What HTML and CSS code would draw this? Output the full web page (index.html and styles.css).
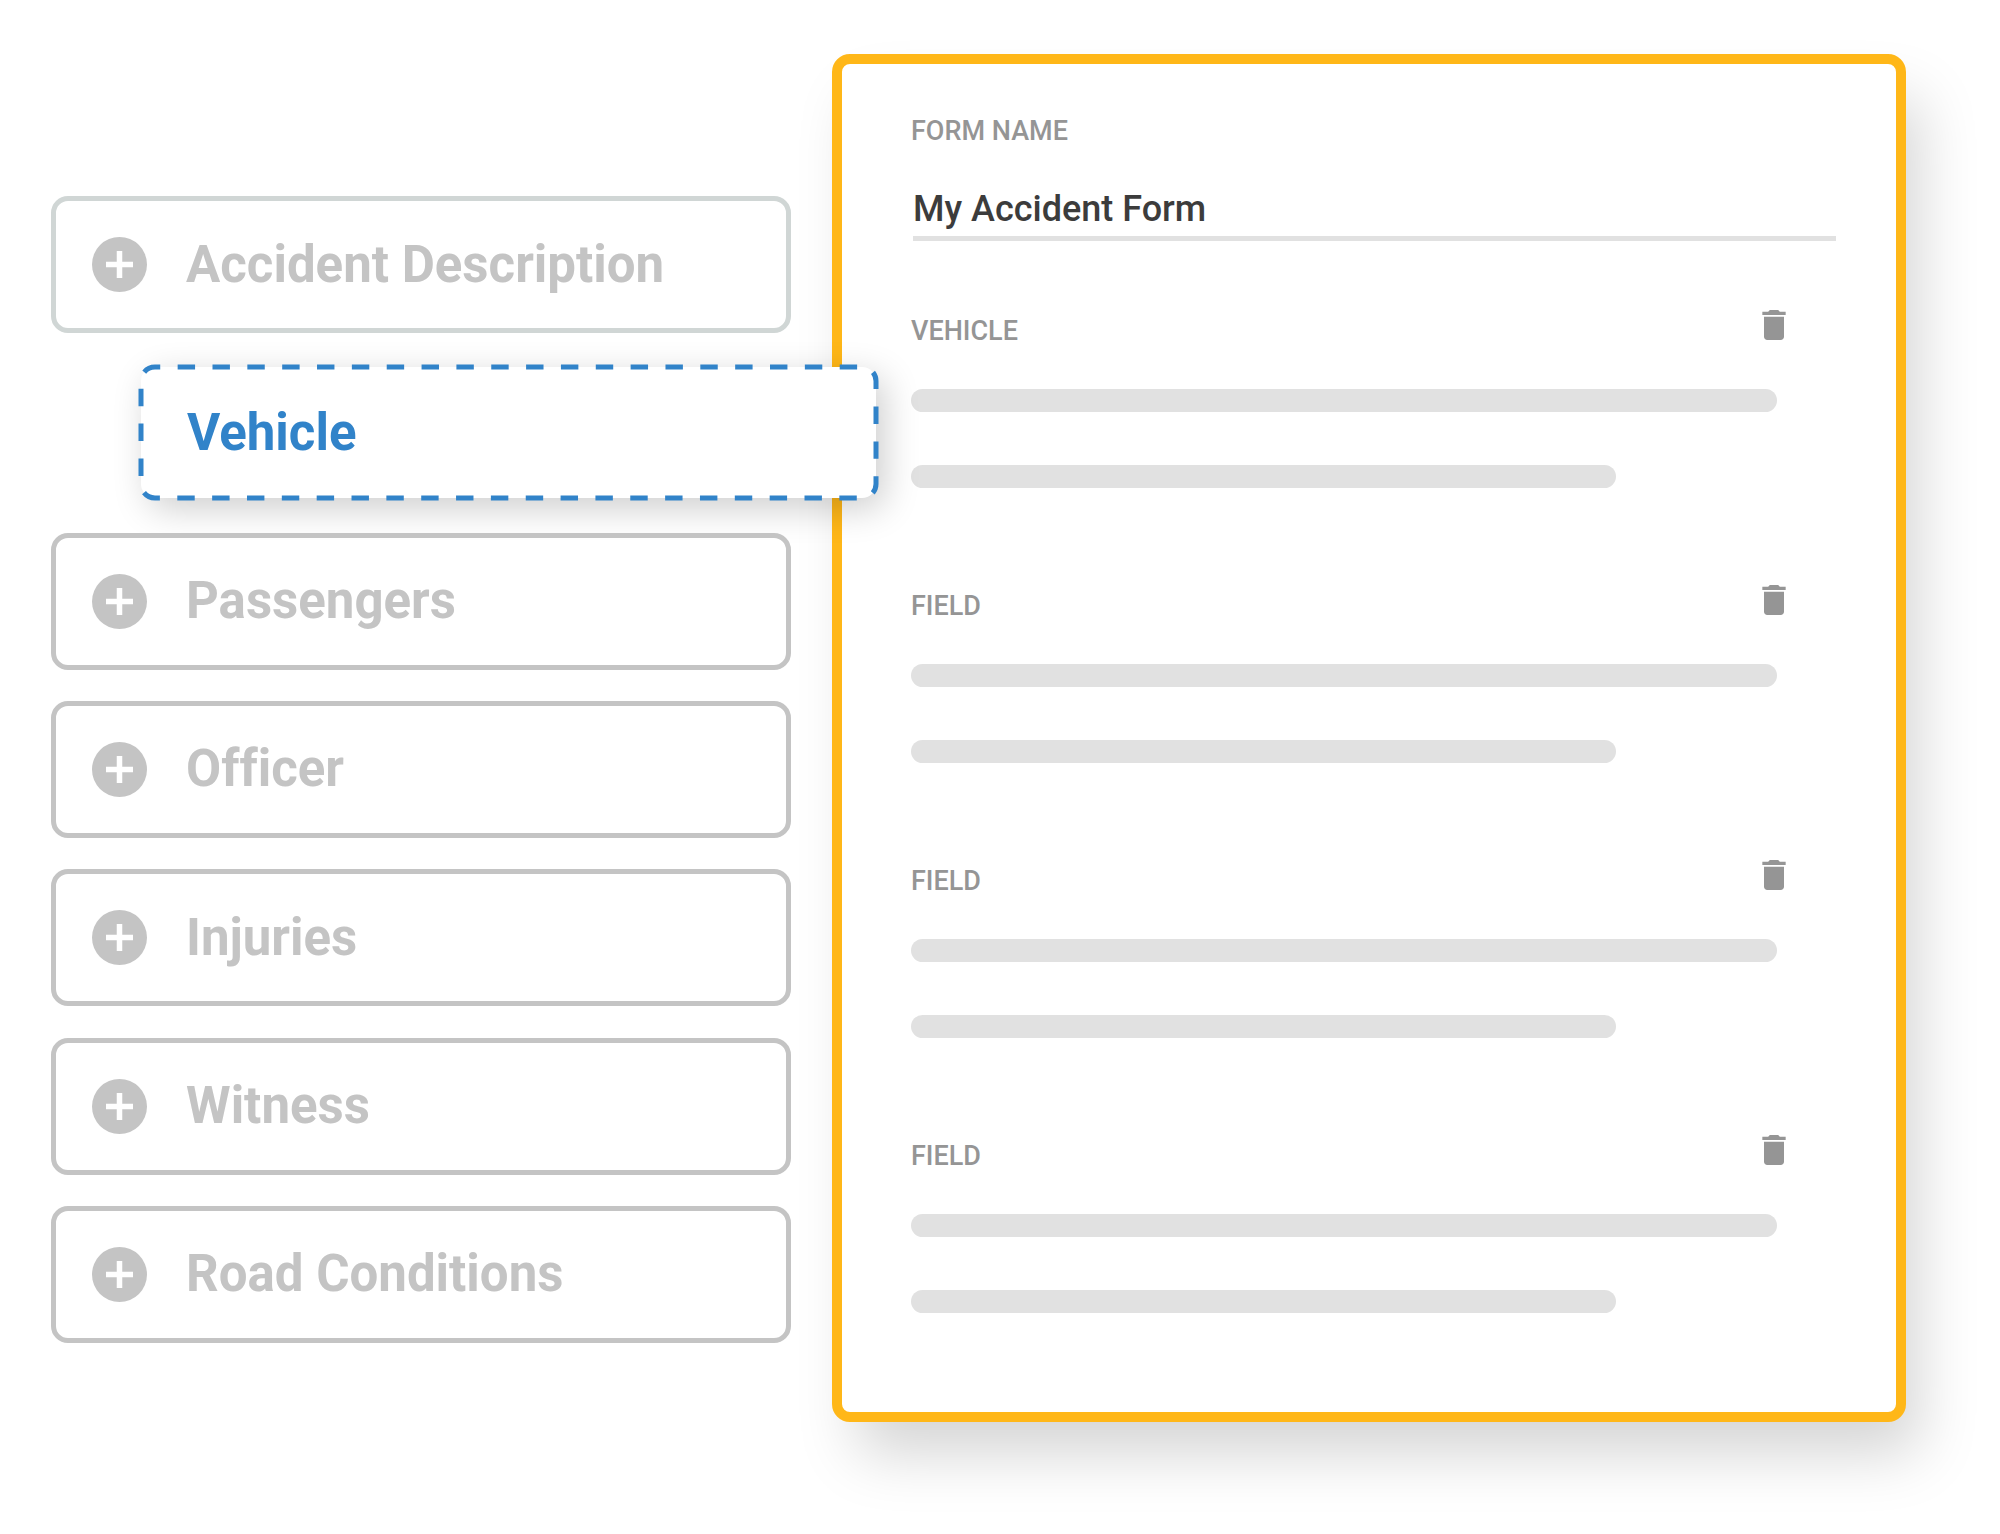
FILE: index.html
```html
<!DOCTYPE html>
<html lang="en">
<head>
    <meta charset="UTF-8">
    <meta name="viewport" content="width=device-width, initial-scale=1.0">
    <title>Form Builder</title>
    <link rel="stylesheet" href="styles.css">
</head>
<body>
<svg class="symbols" aria-hidden="true">
    <symbol id="icon-add" viewBox="0 0 55 55">
        <circle cx="27.5" cy="27.5" r="27.5" fill="currentColor"/>
        <path d="M27.5 14v27M14 27.5h27" stroke="#fff" stroke-width="5.5"/>
    </symbol>
    <symbol id="icon-delete" viewBox="0 0 24 24">
        <path fill="currentColor" d="M6 19c0 1.1.9 2 2 2h8c1.1 0 2-.9 2-2V7H6v12zM19 4h-3.5l-1-1h-5l-1 1H5v2h14V4z"/>
    </symbol>
</svg>
<main class="builder">
    <ul class="sections">
        <li><button type="button" class="section section-first"><svg class="add-icon" aria-hidden="true"><use href="#icon-add"/></svg>Accident Description</button></li>
        <li class="dragging">
            <button type="button" class="section-dragged">Vehicle</button>
            <svg class="dash-outline" aria-hidden="true"><rect width="100%" height="100%" rx="14" pathLength="980"/></svg>
        </li>
        <li><button type="button" class="section"><svg class="add-icon" aria-hidden="true"><use href="#icon-add"/></svg>Passengers</button></li>
        <li><button type="button" class="section"><svg class="add-icon" aria-hidden="true"><use href="#icon-add"/></svg>Officer</button></li>
        <li><button type="button" class="section"><svg class="add-icon" aria-hidden="true"><use href="#icon-add"/></svg>Injuries</button></li>
        <li><button type="button" class="section"><svg class="add-icon" aria-hidden="true"><use href="#icon-add"/></svg>Witness</button></li>
        <li><button type="button" class="section"><svg class="add-icon" aria-hidden="true"><use href="#icon-add"/></svg>Road Conditions</button></li>
    </ul>

    <form class="form-panel">
        <label class="form-label" for="formName">FORM NAME</label>
        <input type="text" id="formName" class="form-input" value="My Accident Form">

        <div class="fields">
            <section class="field">
                <div class="field-header">
                    <h2 class="form-label">VEHICLE</h2>
                    <button type="button" class="delete-button" aria-label="Delete vehicle"><svg aria-hidden="true"><use href="#icon-delete"/></svg></button>
                </div>
                <div class="line"></div>
                <div class="line line-short"></div>
            </section>
            <section class="field">
                <div class="field-header">
                    <h2 class="form-label">FIELD</h2>
                    <button type="button" class="delete-button" aria-label="Delete field"><svg aria-hidden="true"><use href="#icon-delete"/></svg></button>
                </div>
                <div class="line"></div>
                <div class="line line-short"></div>
            </section>
            <section class="field">
                <div class="field-header">
                    <h2 class="form-label">FIELD</h2>
                    <button type="button" class="delete-button" aria-label="Delete field"><svg aria-hidden="true"><use href="#icon-delete"/></svg></button>
                </div>
                <div class="line"></div>
                <div class="line line-short"></div>
            </section>
            <section class="field">
                <div class="field-header">
                    <h2 class="form-label">FIELD</h2>
                    <button type="button" class="delete-button" aria-label="Delete field"><svg aria-hidden="true"><use href="#icon-delete"/></svg></button>
                </div>
                <div class="line"></div>
                <div class="line line-short"></div>
            </section>
        </div>
    </form>
</main>
</body>
</html>
```
FILE: styles.css
```css
* {
    box-sizing: border-box;
}
body {
    font-family: Roboto, Arial, sans-serif;
    font-variant-ligatures: none;
    margin: 0;
    background-color: #fff;
}
button,
input {
    font-family: inherit;
    font-variant-ligatures: inherit;
}
.symbols {
    display: none;
}
.builder {
    display: grid;
    grid-template-columns: 740fr 1074fr;
    column-gap: 41px;
    padding: 54px 94px 112px 51px;
}

/* section list */
.sections {
    display: flex;
    flex-direction: column;
    justify-content: space-between;
    list-style: none;
    margin: 0;
    padding: 142px 0 79px;
}
.sections li {
    position: relative;
    z-index: 2;
}
.section,
.section-dragged {
    display: flex;
    align-items: center;
    width: 100%;
    font-size: 51px;
    font-weight: 700;
    line-height: 60px;
    background: #fff;
    cursor: pointer;
}
.section {
    gap: 39px;
    height: 137px;
    padding: 0 36px;
    color: #c4c4c4;
    border: 5px solid #c4c4c4;
    border-radius: 17px;
}
.section-first {
    border-color: #d0d6d5;
}
.add-icon {
    width: 55px;
    height: 55px;
}
.sections .dragging {
    z-index: 1;
    margin: 3px -85px 3px 90px;
}
.section-dragged {
    height: 131px;
    padding: 0 46px;
    color: #3183c9;
    border: none;
    border-radius: 14px;
    box-shadow: 8px 10px 36px rgba(0, 0, 0, 0.2);
    cursor: grabbing;
}
.dash-outline {
    position: absolute;
    inset: 0;
    width: 100%;
    height: 100%;
    overflow: visible;
    pointer-events: none;
}
.dash-outline rect {
    fill: none;
    stroke: #3183c9;
    stroke-width: 5px;
    stroke-dasharray: 10;
    stroke-dashoffset: 7;
}

/* form */
.form-panel {
    padding: 51px 60px 99px 69px;
    background: #fff;
    border: 10px solid #ffb718;
    border-radius: 18px;
    box-shadow: 19px 38px 60px -6px rgba(0, 0, 0, 0.17);
}
.form-label {
    display: block;
    margin: 0;
    font-size: 27px;
    font-weight: 500;
    line-height: 32px;
    color: #959595;
}
.form-input {
    display: block;
    width: calc(100% - 2px);
    height: 54px;
    margin: 40px 0 64px 2px;
    padding: 0 0 5px;
    font-size: 36px;
    font-weight: 500;
    line-height: 44px;
    color: #3c3c3c;
    background: none;
    border: none;
    border-bottom: 5px solid #e1e1e1;
}
.fields {
    display: flex;
    flex-direction: column;
    gap: 92px;
    padding-right: 42px;
}
.field-header {
    display: flex;
    justify-content: space-between;
    height: 42px;
    margin-bottom: 42px;
}
.field-header .form-label {
    align-self: flex-end;
}
.delete-button {
    width: 40px;
    height: 40px;
    padding: 0;
    color: #959595;
    background: none;
    border: none;
    cursor: pointer;
}
.delete-button svg {
    display: block;
    width: 40px;
    height: 40px;
}
.line {
    height: 23px;
    margin-right: 17px;
    background: #e1e1e1;
    border-radius: 12px;
}
.line-short {
    margin-top: 53px;
    margin-right: 178px;
}
```
